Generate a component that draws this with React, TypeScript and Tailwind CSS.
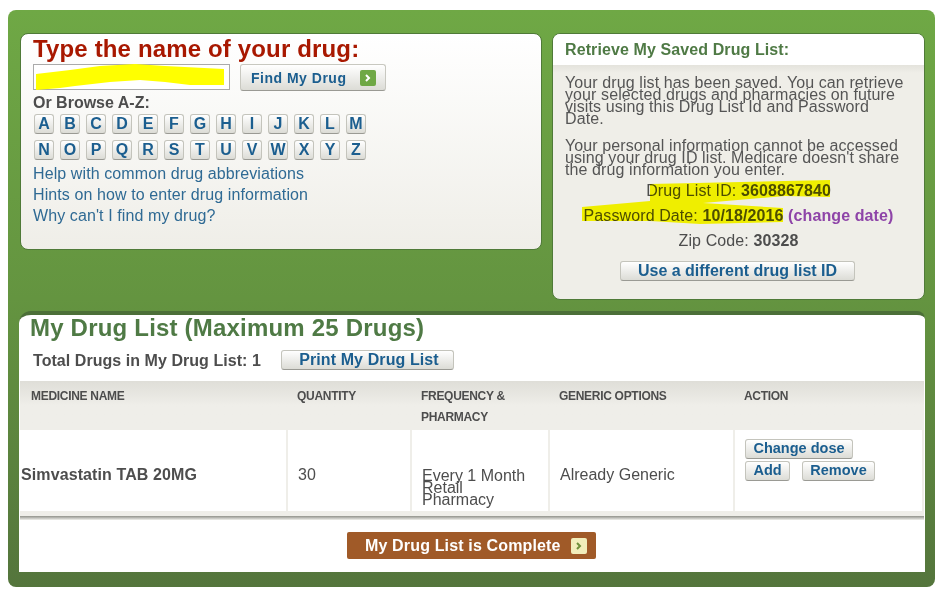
const row1 = ['A', 'B', 'C', 'D', 'E', 'F', 'G', 'H', 'I', 'J', 'K', 'L', 'M']
const row2 = ['N', 'O', 'P', 'Q', 'R', 'S', 'T', 'U', 'V', 'W', 'X', 'Y', 'Z']

const btn =
  'border border-[#c4c4bc] border-b-[#9a9a94] rounded-[3px] bg-gradient-to-b from-white to-[#dcdcd6] text-[#1b5e8f] font-bold leading-none flex items-center justify-center'

function Arrow({ light }: { light?: boolean }) {
  return (
    <span
      className={`w-4 h-4 rounded-[2px] flex items-center justify-center ${light ? 'bg-[#f2eebb]' : 'bg-[#6fa845]'}`}
    >
      <svg width="8" height="8" viewBox="0 0 8 8">
        <path d="M2 1l3 3-3 3" fill="none" stroke={light ? '#6f8f3a' : '#fff'} strokeWidth="2" />
      </svg>
    </span>
  )
}

function LetterRow({ letters }: { letters: string[] }) {
  return (
    <div className="flex gap-[6px]">
      {letters.map((l) => (
        <span key={l} className={`${btn} w-[20px] h-[20px] text-[16px]`}>
          {l}
        </span>
      ))}
    </div>
  )
}

export default function App() {
  return (
    <div className="w-[947px] h-[590px] bg-white pt-[10px] pl-[8px] font-['Liberation_Sans',Arial,sans-serif] text-[#4d4d4d] overflow-hidden">
      <div className="w-[927px] h-[577px] rounded-lg bg-gradient-to-b from-[#6fa845] via-[#649440] to-[#54753c] pt-[23px] pl-[12px]">
        <div className="flex items-start gap-[10px]">
          <section className="relative w-[522px] h-[217px] rounded-lg border border-[#4f7a38] bg-gradient-to-b from-white to-[#efeee8] pl-[12px]">
            <h1 className="text-[24px] leading-[28px] mt-[1px] font-bold text-[#a81800] tracking-[0.15px]">
              Type the name of your drug:
            </h1>
            <div className="flex items-start gap-[10px] mt-[1px]">
              <div className="relative w-[197px] h-[26px] border border-[#aaaaaa] bg-white">
                <svg className="absolute left-0 top-[-1px]" width="192" height="28" viewBox="0 0 192 28">
                  <path
                    d="M2 10 L36 6 L66 2 L101 0 L131 2 L190 5 L190 21 L156 21 L131 18 L106 16 L76 18 L41 22 L26 24 L2 26 Z"
                    fill="#ffff00"
                  />
                </svg>
              </div>
              <button className={`${btn} justify-start pl-[10px] w-[146px] h-[27px] gap-[14px] text-[14px] tracking-[0.5px] border-[#c8c8c0]`}>
                Find My Drug
                <Arrow />
              </button>
            </div>
            <p className="text-[16px] leading-[18px] font-bold mt-[3px]">Or Browse A-Z:</p>
            <div className="flex flex-col gap-[6px] mt-[2px] ml-[1px]">
              <LetterRow letters={row1} />
              <LetterRow letters={row2} />
            </div>
            <div className="mt-[3px] text-[16px] leading-[21px] text-[#2f6a94] tracking-[0.1px]">
              <p>Help with common drug abbreviations</p>
              <p>Hints on how to enter drug information</p>
              <p>Why can't I find my drug?</p>
            </div>
          </section>

          <section className="relative w-[373px] h-[267px] rounded-lg border border-[#4f7a38] bg-[#efeee8] overflow-hidden">
            <div className="h-[31px] bg-white pl-[12px] pt-[7px] text-[16px] leading-[18px] font-bold text-[#4f7a45] tracking-[0.1px]">
              Retrieve My Saved Drug List:
            </div>
            <div className="h-[8px] bg-gradient-to-b from-[#e4e3dc] to-[#efeee8]" />
            <div className="w-[354px] pl-[12px] mt-[4px] text-[16px] leading-[12px] text-[#555555] tracking-[0.1px]">
              <p>Your drug list has been saved. You can retrieve your selected drugs and pharmacies on future visits using this Drug List Id and Password Date.</p>
              <p className="mt-[15px]">Your personal information cannot be accessed using your drug ID list. Medicare doesn't share the drug information you enter.</p>
            </div>
            <div className="relative mt-[2px] text-center text-[16px] leading-[25px] tracking-[0.1px]">
              <p className="relative">
                Drug List ID: <b>3608867840</b>
              </p>
              <p className="relative">
                Password Date: <b>10/18/2016</b> <b className="text-[#8e44a8]">(change date)</b>
              </p>
              <p className="relative">
                Zip Code: <b>30328</b>
              </p>
              <svg className="absolute left-[27px] top-[-3px] mix-blend-multiply" width="260" height="52" viewBox="0 0 260 52">
                <path
                  d="M70 9 L250 5 L250 22 L205 21 L123 28 L203 33 L203 47 L120 49 L70 46 L2 46 L2 32 L70 26 Z"
                  fill="#ffff00"
                />
              </svg>
            </div>
            <button className={`${btn} w-[235px] h-[20px] mt-[8px] ml-[67px] text-[16px]`}>Use a different drug list ID</button>
          </section>
        </div>

        <section className="w-[906px] h-[261px] mt-[11px] ml-[-1px] rounded-tl-xl rounded-tr-lg border-t-[4px] border-[#4c6f38] bg-white">
          <h2 className="pl-[11px] text-[24px] leading-[26px] font-bold text-[#4f7a45] tracking-[0.2px]">
            My Drug List (Maximum 25 Drugs)
          </h2>
          <div className="flex items-start pl-[14px] mt-[9px] h-[31px]">
            <span className="w-[248px] text-[16px] leading-[20px] font-bold mt-[1px] tracking-[0.05px]">Total Drugs in My Drug List: 1</span>
            <button className={`${btn} w-[173px] h-[20px] pl-[3px] text-[16px] font-bold tracking-[0.1px]`}>Print My Drug List</button>
          </div>
          <div className="w-[904px] ml-[1px]">
            <div className="h-[49px] bg-gradient-to-b from-[#dfded8] via-[#efeee9] to-[#efeee9] flex pt-[5px] text-[12px] leading-[21px] font-bold tracking-[-0.3px] text-[#4d4d4d]">
              <span className="w-[277px] pl-[11px]">MEDICINE NAME</span>
              <span className="w-[124px]">QUANTITY</span>
              <span className="w-[138px]">
                FREQUENCY &<br />
                PHARMACY
              </span>
              <span className="w-[185px]">GENERIC OPTIONS</span>
              <span>ACTION</span>
            </div>
            <div className="h-[81px] flex bg-[#efeee9] gap-[2px] pr-[2px] text-[16px]">
              <div className="w-[266px] bg-white pl-[1px] pt-[9px] flex items-center font-bold tracking-[0.1px]">Simvastatin TAB 20MG</div>
              <div className="w-[122px] bg-white pl-[10px] pt-[9px] flex items-center">30</div>
              <div className="w-[136px] bg-white pl-[10px] pr-[20px] pt-[40px] leading-[12px]">Every 1 Month Retail Pharmacy</div>
              <div className="w-[183px] bg-white pl-[10px] pt-[9px] flex items-center">Already Generic</div>
              <div className="flex-1 bg-white pl-[10px] pt-[9px] flex flex-col items-start gap-[2px]">
                <button className={`${btn} w-[108px] h-[20px] pb-[2px] text-[14.5px]`}>Change dose</button>
                <div className="flex gap-[12px]">
                  <button className={`${btn} w-[45px] h-[20px] pb-[2px] text-[14.5px]`}>Add</button>
                  <button className={`${btn} w-[73px] h-[20px] pb-[2px] text-[14.5px]`}>Remove</button>
                </div>
              </div>
            </div>
            <div className="h-[9px] bg-gradient-to-b from-[#efeee9] from-50% via-[#9a9b94] via-60% to-[#f0f0ec]" />
          </div>
          <button className="flex items-center justify-start pl-[18px] gap-[10px] w-[249px] h-[27px] mt-[12px] ml-[328px] rounded-[2px] bg-[#a05a28] text-white text-[16px] font-bold tracking-[0.15px]">
            My Drug List is Complete
            <Arrow light />
          </button>
        </section>
      </div>
    </div>
  )
}
